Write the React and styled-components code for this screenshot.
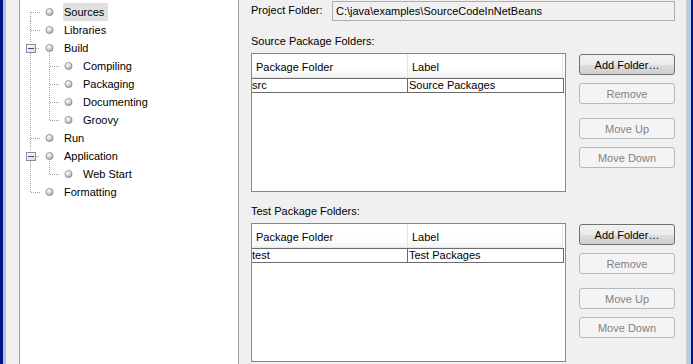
import React from 'react';
import styled, {createGlobalStyle} from 'styled-components';

const Global = createGlobalStyle`
    html, body {
        margin: 0;
        padding: 0;
        background: #f0f0f0;
    }
    body {
        font-family: "Liberation Sans", Arial, sans-serif;
        font-size: 11px;
        color: #000;
    }
`;

const Window = styled.div`
    display: flex;
    width: 693px;
    height: 364px;
    overflow: hidden;
`;

const LeftFrame = styled.div`
    width: 3px;
    flex: none;
    background: #061188;
    border-right: 3px solid #a8c8ec;
`;

const RightFrame = styled.div`
    width: 4px;
    flex: none;
    background: #061188;
    border-left: 4px solid #b3d0ef;
`;

const Edge = styled.div`
    width: 1px;
    flex: none;
    background: #c7ced6;
`;

const Content = styled.div`
    flex: 1;
    display: flex;
    background: #f0f0f0;
    padding-left: 13px;
`;

const TreePanel = styled.div`
    width: 217px;
    flex: none;
    background: #fff;
    border: 1px solid #a0a0a0;
    border-top: none;
    border-bottom: none;
    padding: 3px 0 0 1px;
`;

const TreeRow = styled.div`
    display: flex;
    align-items: center;
    height: 18px;
`;

const TreeLabel = styled.span`
    margin-left: 4px;
    padding: 0 4px 0 1px;
    line-height: 18px;
    background: ${p => (p.$selected ? '#e0e0e0' : 'transparent')};
`;

const Right = styled.div`
    flex: 1;
    padding: 1px 11px 0 12px;
    display: flex;
    flex-direction: column;
`;

const ProjectRow = styled.div`
    display: flex;
    align-items: center;
    height: 20px;
`;

const FieldLabel = styled.span`
    width: 81px;
    flex: none;
    margin-top: -3px;
`;

const Field = styled.div`
    flex: 1;
    height: 18px;
    border: 1px solid #abadb3;
    background: #f0f0f0;
    padding-left: 3px;
    display: flex;
    align-items: center;
`;

const SectionTitle = styled.div`
    margin-top: ${p => p.$top}px;
    height: 14px;
    line-height: 14px;
`;

const Section = styled.div`
    display: flex;
    gap: 13px;
    margin-top: 5px;
`;

const Table = styled.div`
    width: 313px;
    height: ${p => p.$height}px;
    border: 1px solid #828790;
    background: #fff;
    flex: none;
`;

const HeaderRow = styled.div`
    display: flex;
    height: 23px;
    width: 311px;
    background: linear-gradient(#ffffff 0%, #ffffff 60%, #f3f4f5 100%);
    border-bottom: 1px solid #e3e5e8;
`;

const HeaderCell = styled.div`
    width: ${p => p.$w}px;
    padding: 2px 0 0 4px;
    box-sizing: border-box;
    border-right: 1px solid #e2e3e4;
    display: flex;
    align-items: center;
`;

const DataRow = styled.div`
    display: flex;
    width: 311px;
    height: 13px;
    border-top: 1px solid #6b6b6b;
    border-bottom: 1px solid #6b6b6b;
    border-right: 1px solid #6b6b6b;
`;

const DataCell = styled.div`
    width: ${p => p.$w}px;
    box-sizing: border-box;
    border-right: ${p => (p.$last ? 'none' : '1px solid #6b6b6b')};
    line-height: 13px;
    padding-left: ${p => (p.$first ? 0 : 1)}px;
`;

const Buttons = styled.div`
    display: flex;
    flex-direction: column;
    width: 96px;
    padding-top: 1px;
`;

const Button = styled.div`
    height: 19px;
    margin-top: ${p => p.$gap || 0}px;
    border: 1px solid ${p => (p.$disabled ? '#b5b9bd' : '#707070')};
    border-radius: 3px;
    background: ${p => (p.$disabled
        ? '#f4f4f4'
        : 'linear-gradient(#f2f2f2 0%, #ebebeb 50%, #dddddd 51%, #cfcfcf 100%)')};
    color: ${p => (p.$disabled ? '#838383' : '#000')};
    display: flex;
    align-items: center;
    justify-content: center;
`;

const Line = ({v, h}) => (
    <svg width="19" height="18" style={{display: 'block', flex: 'none'}}>
        {v !== 'none' && (
            <line
                x1="9.5" x2="9.5"
                y1={v === 'bottom' ? 9 : 0}
                y2={v === 'top' ? 10 : 18}
                stroke="#a0a0a0" strokeDasharray="1 1"
            />
        )}
        {h && <line x1="10" x2="20" y1="9.5" y2="9.5" stroke="#a0a0a0" strokeDasharray="1 1" />}
    </svg>
);

const Expander = () => (
    <svg width="19" height="18" style={{display: 'block', flex: 'none'}}>
        <line x1="9.5" x2="9.5" y1="0" y2="4" stroke="#a0a0a0" strokeDasharray="1 1" />
        <line x1="9.5" x2="9.5" y1="14" y2="18" stroke="#a0a0a0" strokeDasharray="1 1" />
        <line x1="15" x2="20" y1="9.5" y2="9.5" stroke="#a0a0a0" strokeDasharray="1 1" />
        <defs>
            <linearGradient id="exp" x1="0" y1="0" x2="1" y2="1">
                <stop offset="0" stopColor="#ffffff" />
                <stop offset="1" stopColor="#d8d8d8" />
            </linearGradient>
        </defs>
        <rect x="5.5" y="5.5" width="9" height="8" fill="url(#exp)" stroke="#8a8f98" />
        <line x1="7" x2="13" y1="9.5" y2="9.5" stroke="#33509a" />
    </svg>
);

const Bullet = ({open}) => (
    <svg width="19" height="18" style={{display: 'block', flex: 'none'}}>
        <defs>
            <radialGradient id="ball" cx="0.4" cy="0.35" r="0.65">
                <stop offset="0" stopColor="#ffffff" />
                <stop offset="0.6" stopColor="#cfcfcf" />
                <stop offset="1" stopColor="#9a9a9a" />
            </radialGradient>
        </defs>
        {open && <line x1="9.5" x2="9.5" y1="14" y2="18" stroke="#a0a0a0" strokeDasharray="1 1" />}
        <circle cx="9.5" cy="9" r="3.6" fill="url(#ball)" stroke="#8e8e8e" strokeWidth="0.8" />
    </svg>
);

const tree = [
    {label: 'Sources', selected: true},
    {label: 'Libraries'},
    {label: 'Build', children: ['Compiling', 'Packaging', 'Documenting', 'Groovy']},
    {label: 'Run'},
    {label: 'Application', children: ['Web Start']},
    {label: 'Formatting'},
];

const rows = [];
tree.forEach((node, i) => {
    const first = i === 0;
    const last = i === tree.length - 1;
    rows.push(
        <TreeRow key={node.label}>
            {node.children
                ? <Expander />
                : <Line v={first ? 'bottom' : last ? 'top' : 'full'} h />}
            <Bullet open={!!node.children} />
            <TreeLabel $selected={node.selected}>{node.label}</TreeLabel>
        </TreeRow>
    );
    (node.children || []).forEach((child, j) => {
        const lastChild = j === node.children.length - 1;
        rows.push(
            <TreeRow key={child}>
                <Line v={last ? 'none' : 'full'} />
                <Line v={lastChild ? 'top' : 'full'} h />
                <Bullet />
                <TreeLabel>{child}</TreeLabel>
            </TreeRow>
        );
    });
});

const PackageSection = ({title, top, folder, label, height}) => (
    <>
        <SectionTitle $top={top}>{title}</SectionTitle>
        <Section>
            <Table $height={height}>
                <HeaderRow>
                    <HeaderCell $w={156}>Package Folder</HeaderCell>
                    <HeaderCell $w={155}>Label</HeaderCell>
                </HeaderRow>
                <DataRow>
                    <DataCell $w={156} $first>{folder}</DataCell>
                    <DataCell $w={155} $last>{label}</DataCell>
                </DataRow>
            </Table>
            <Buttons>
                <Button>Add Folder…</Button>
                <Button $disabled $gap={8}>Remove</Button>
                <Button $disabled $gap={14}>Move Up</Button>
                <Button $disabled $gap={8}>Move Down</Button>
            </Buttons>
        </Section>
    </>
);

export default function App() {
    return (
        <Window>
            <Global />
            <LeftFrame />
            <Content>
                <TreePanel>{rows}</TreePanel>
                <Right>
                    <ProjectRow>
                        <FieldLabel>Project Folder:</FieldLabel>
                        <Field>C:\java\examples\SourceCodeInNetBeans</Field>
                    </ProjectRow>
                    <PackageSection
                        title="Source Package Folders:"
                        top={13}
                        folder="src"
                        label="Source Packages"
                        height={137}
                    />
                    <PackageSection
                        title="Test Package Folders:"
                        top={12}
                        folder="test"
                        label="Test Packages"
                        height={137}
                    />
                </Right>
            </Content>
            <Edge />
            <RightFrame />
        </Window>
    );
}
